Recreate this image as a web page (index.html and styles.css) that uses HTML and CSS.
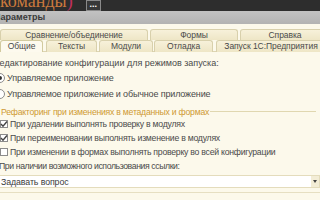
FILE: index.html
```html
<!DOCTYPE html>
<html lang="ru">
<head>
<meta charset="utf-8">
<link rel="stylesheet" href="styles.css">
</head>
<body>
<div class="topbar">
  <span class="title">команды<span class="paren">)</span></span>
  <span class="morebtn">...</span>
</div>
<div class="caption">Параметры</div>
<div class="panel">
  <div class="tabrow row1">
    <div class="tab w1">Сравнение/объединение</div>
    <div class="tab w2">Формы</div>
    <div class="tab w3">Справка</div>
  </div>
  <div class="tabrow row2">
    <div class="tab active t1">Общие</div>
    <div class="tab t2">Тексты</div>
    <div class="tab t3">Модули</div>
    <div class="tab t4">Отладка</div>
    <div class="tab t5">Запуск 1С:Предприятия</div>
  </div>
  <div class="content">
    <div class="row lbl-edit">Редактирование конфигурации для режимов запуска:</div>
    <div class="row opt"><span class="radio on"></span>Управляемое приложение</div>
    <div class="row opt"><span class="radio"></span>Управляемое приложение и обычное приложение</div>
    <div class="group"><span class="grouptitle">Рефакторинг при изменениях в метаданных и формах</span><span class="groupline"></span></div>
    <div class="row chk"><span class="box on"><svg width="8" height="8" viewBox="0 0 8 8"><path d="M1 4 L3 6.2 L7 1.5" fill="none" stroke="#444" stroke-width="1.4"/></svg></span>При удалении выполнять проверку в модулях</div>
    <div class="row chk"><span class="box on"><svg width="8" height="8" viewBox="0 0 8 8"><path d="M1 4 L3 6.2 L7 1.5" fill="none" stroke="#444" stroke-width="1.4"/></svg></span>При переименовании выполнять изменение в модулях</div>
    <div class="row chk"><span class="box"></span>При изменении в формах выполнять проверку во всей конфигурации</div>
    <div class="row lbl-ref">При наличии возможного использования ссылки:</div>
    <div class="select"><span class="selval">Задавать вопрос</span><span class="arrow"></span></div>
    <div class="bottomline"></div>
  </div>
</div>
</body>
</html>
```
FILE: styles.css
```css
html, body {
  margin: 0;
  padding: 0;
  width: 320px;
  height: 200px;
  overflow: hidden;
  background: #fcf9eb;
  font-family: "Liberation Sans", Arial, sans-serif;
}
.topbar {
  height: 11px;
  background: #2d2d2d;
  display: flex;
  align-items: flex-start;
  overflow: hidden;
}
.title {
  display: block;
  font-family: "Liberation Serif", "Times New Roman", serif;
  font-size: 18px;
  line-height: 11px;
  margin-top: -4px;
  color: #c9793d;
  white-space: nowrap;
}
.paren { color: #c2305e; }
.morebtn {
  margin-left: 13px;
  width: 13px;
  height: 9px;
  border: 1px solid #8a8a8a;
  background: #383838;
  color: #fff;
  font-size: 9px;
  font-weight: bold;
  line-height: 6px;
  text-align: center;
}
.caption {
  height: 13px;
  background: linear-gradient(#c2c2c2, #b3b3b3);
  font-size: 9px;
  font-weight: bold;
  color: #3a3a3a;
  line-height: 13px;
  margin-left: -6px;
  white-space: nowrap;
}
.panel {
  padding-top: 5px;
}
.tabrow {
  display: flex;
  white-space: nowrap;
}
.tab {
  box-sizing: border-box;
  flex: none;
  font-size: 8.5px;
  letter-spacing: -0.05px;
  color: #4a4a4a;
  text-align: center;
  background: linear-gradient(#f7f1da, #eee6c6);
  border: 1px solid #d8d0ac;
  border-bottom: none;
  border-radius: 3px 3px 0 0;
  overflow: hidden;
}
.row1 { height: 11px; }
.row1 .tab { height: 11px; line-height: 11px; }
.w1 { width: 148px; }
.w2 { width: 88px; margin-left: 2px; }
.w3 { width: 90px; margin-left: 2px; }
.row2 {
  height: 12px;
  border-bottom: 1px solid #ddd5b2;
  box-sizing: border-box;
}
.row2 .tab { height: 12px; line-height: 11px; }
.t1 { width: 43px; }
.t2 { width: 51px; margin-left: 3px; }
.t3 { width: 54px; margin-left: 2px; }
.t4 { width: 59px; margin-left: 1px; }
.t5 { width: 110px; margin-left: 3px; }
.tab.active {
  background: #fdfaee;
  height: 12px;
  margin-bottom: -1px;
  border-color: #d2ca9f;
}
.content {
  padding-top: 4px;
  font-size: 8.7px;
  letter-spacing: -0.25px;
  color: #4a4a4a;
  display: flex;
  flex-direction: column;
}
.row {
  height: 14px;
  display: flex;
  align-items: center;
  white-space: nowrap;
}
.lbl-edit { margin-left: -6px; font-size: 9px; letter-spacing: 0; }
.opt { height: 16px; font-size: 9px; letter-spacing: -0.15px; }
.radio {
  width: 8px;
  height: 8px;
  border: 1px solid #8c8c8c;
  border-radius: 50%;
  background: #fff;
  margin-left: -5px;
  margin-right: 2px;
  flex: none;
  display: flex;
  align-items: center;
  justify-content: center;
}
.radio.on::after {
  content: "";
  width: 4px;
  height: 4px;
  border-radius: 50%;
  background: #333;
}
.group {
  margin-top: 4px;
  height: 11px;
  display: flex;
  align-items: center;
  white-space: nowrap;
}
.grouptitle { color: #cf9a33; margin-left: 1px; }
.groupline {
  flex: 1;
  height: 1px;
  background: #e0d7b0;
  margin-left: 1px;
  margin-right: 4px;
}
.box {
  box-sizing: border-box;
  width: 8px;
  height: 8px;
  border: 1px solid #8c8c8c;
  background: #fff;
  margin-right: 2px;
  flex: none;
  display: flex;
  align-items: center;
  justify-content: center;
}
.box svg { flex: none; }
.lbl-ref { margin-left: -1px; letter-spacing: -0.4px; }
.select {
  margin-top: 2px;
  height: 13px;
  box-sizing: border-box;
  border: 1px solid #e4dcbc;
  border-left: none;
  background: #fff;
  display: flex;
  align-items: center;
  font-size: 8.8px;
  letter-spacing: -0.1px;
}
.selval { flex: 1; color: #3c3c3c; padding-left: 1px; }
.arrow {
  width: 8px;
  height: 11px;
  background: #f3edd6;
  display: flex;
  align-items: center;
  justify-content: center;
}
.arrow::after {
  content: "";
  border-left: 2.5px solid transparent;
  border-right: 2.5px solid transparent;
  border-top: 3px solid #444;
}
.bottomline {
  margin-top: 4px;
  height: 1px;
  background: #e6dfc2;
}
```
